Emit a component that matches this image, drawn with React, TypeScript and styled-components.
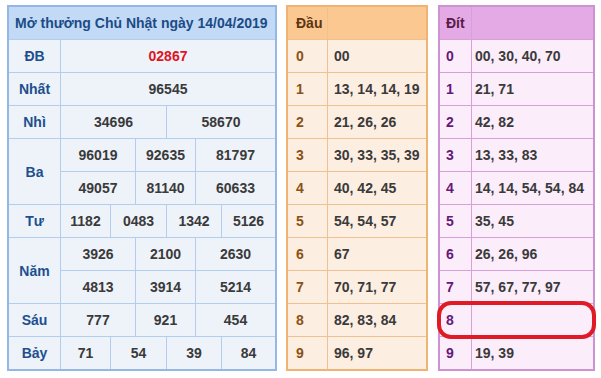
import React from "react";
import styled, { createGlobalStyle } from "styled-components";

const GlobalStyle = createGlobalStyle`
  body {
    margin: 0;
    background: #fff;
    font-family: "Liberation Sans", Arial, sans-serif;
  }
`;

const Page = styled.div`
  display: flex;
  align-items: flex-start;
  padding: 5px 0 0 7px;
`;

const ResultTable = styled.div`
  display: grid;
  grid-template-columns: 51px 49px 24px 30px 28px 25px 53px;
  grid-auto-rows: 32px;
  gap: 1px;
  background: #b3cdee;
  border: 2px solid #93b8e6;
  margin-right: 9px;
`;

const Title = styled.div`
  grid-column: 1 / -1;
  background: #c2daf6;
  color: #1c4b86;
  font-size: 14px;
  font-weight: bold;
  display: flex;
  align-items: center;
  padding-left: 6px;
`;

const Label = styled.div<{ rows?: number }>`
  grid-row: span ${(p) => p.rows || 1};
  background: #eef3fa;
  color: #1d4f8e;
  font-size: 14px;
  font-weight: bold;
  display: flex;
  align-items: center;
  justify-content: center;
`;

const Num = styled.div<{ span: number; red?: boolean }>`
  grid-column: span ${(p) => p.span};
  background: #eef3fa;
  color: ${(p) => (p.red ? "#e0141e" : "#3a3a3a")};
  font-size: 14px;
  font-weight: bold;
  display: flex;
  align-items: center;
  justify-content: center;
`;

type Theme = {
  head: string;
  body: string;
  line: string;
  edge: string;
  key: string;
  title: string;
};

const orange: Theme = {
  head: "#fbc891",
  body: "#fdeee2",
  line: "#efc090",
  edge: "#efb474",
  key: "#8a5214",
  title: "#5e3412",
};

const purple: Theme = {
  head: "#e4aae6",
  body: "#fcedfb",
  line: "#d7a0da",
  edge: "#cc92d2",
  key: "#661878",
  title: "#5a1a48",
};

const Wrap = styled.div`
  position: relative;
  margin-right: 10px;
`;

const SideTable = styled.div<{ t: Theme; keyW: number; valW: number }>`
  display: grid;
  grid-template-columns: ${(p) => p.keyW}px ${(p) => p.valW}px;
  grid-auto-rows: 32px;
  gap: 1px;
  background: ${(p) => p.t.line};
  border: 2px solid ${(p) => p.t.edge};
`;

const HeadCell = styled.div<{ t: Theme; pad: number }>`
  background: ${(p) => p.t.head};
  color: ${(p) => p.t.title};
  font-size: 14px;
  font-weight: bold;
  display: flex;
  align-items: center;
  padding-left: ${(p) => p.pad}px;
`;

const KeyCell = styled.div<{ t: Theme; pad: number }>`
  background: ${(p) => p.t.body};
  color: ${(p) => p.t.key};
  font-size: 14px;
  font-weight: bold;
  display: flex;
  align-items: center;
  padding-left: ${(p) => p.pad}px;
`;

const ValCell = styled.div<{ t: Theme; pad: number }>`
  background: ${(p) => p.t.body};
  color: #3a3a3a;
  font-size: 14px;
  font-weight: bold;
  display: flex;
  align-items: center;
  padding-left: ${(p) => p.pad}px;
  white-space: nowrap;
`;

const Circle = styled.div`
  position: absolute;
  left: -1px;
  top: 296px;
  width: 151px;
  height: 30px;
  border: 4px solid #e01b26;
  border-radius: 14px;
`;

const dau = [
  "00",
  "13, 14, 14, 19",
  "21, 26, 26",
  "30, 33, 35, 39",
  "40, 42, 45",
  "54, 54, 57",
  "67",
  "70, 71, 77",
  "82, 83, 84",
  "96, 97",
];

const dit = [
  "00, 30, 40, 70",
  "21, 71",
  "42, 82",
  "13, 33, 83",
  "14, 14, 54, 54, 84",
  "35, 45",
  "26, 26, 96",
  "57, 67, 77, 97",
  "",
  "19, 39",
];

const SplitTable = ({
  t,
  title,
  values,
  keyW,
  valW,
  keyPad,
  valPad,
}: {
  t: Theme;
  title: string;
  values: string[];
  keyW: number;
  valW: number;
  keyPad: number;
  valPad: number;
}) => (
  <SideTable t={t} keyW={keyW} valW={valW}>
    <HeadCell t={t} pad={keyPad}>{title}</HeadCell>
    <HeadCell t={t} pad={valPad}></HeadCell>
    {values.map((v, i) => (
      <React.Fragment key={i}>
        <KeyCell t={t} pad={keyPad}>{i}</KeyCell>
        <ValCell t={t} pad={valPad}>{v}</ValCell>
      </React.Fragment>
    ))}
  </SideTable>
);

export default function App() {
  return (
    <>
      <GlobalStyle />
      <Page>
        <ResultTable>
          <Title>Mở thưởng Chủ Nhật ngày 14/04/2019</Title>

          <Label>ĐB</Label>
          <Num span={6} red>02867</Num>

          <Label>Nhất</Label>
          <Num span={6}>96545</Num>

          <Label>Nhì</Label>
          <Num span={3}>34696</Num>
          <Num span={3}>58670</Num>

          <Label rows={2}>Ba</Label>
          <Num span={2}>96019</Num>
          <Num span={2}>92635</Num>
          <Num span={2}>81797</Num>
          <Num span={2}>49057</Num>
          <Num span={2}>81140</Num>
          <Num span={2}>60633</Num>

          <Label>Tư</Label>
          <Num span={1}>1182</Num>
          <Num span={2}>0483</Num>
          <Num span={2}>1342</Num>
          <Num span={1}>5126</Num>

          <Label rows={2}>Năm</Label>
          <Num span={2}>3926</Num>
          <Num span={2}>2100</Num>
          <Num span={2}>2630</Num>
          <Num span={2}>4813</Num>
          <Num span={2}>3914</Num>
          <Num span={2}>5214</Num>

          <Label>Sáu</Label>
          <Num span={2}>777</Num>
          <Num span={2}>921</Num>
          <Num span={2}>454</Num>

          <Label>Bảy</Label>
          <Num span={1}>71</Num>
          <Num span={2}>54</Num>
          <Num span={2}>39</Num>
          <Num span={1}>84</Num>
        </ResultTable>

        <Wrap>
          <SplitTable t={orange} title="Đầu" values={dau} keyW={39} valW={98} keyPad={8} valPad={6} />
        </Wrap>

        <Wrap>
          <SplitTable t={purple} title="Đít" values={dit} keyW={31} valW={121} keyPad={6} valPad={3} />
          <Circle />
        </Wrap>
      </Page>
    </>
  );
}
